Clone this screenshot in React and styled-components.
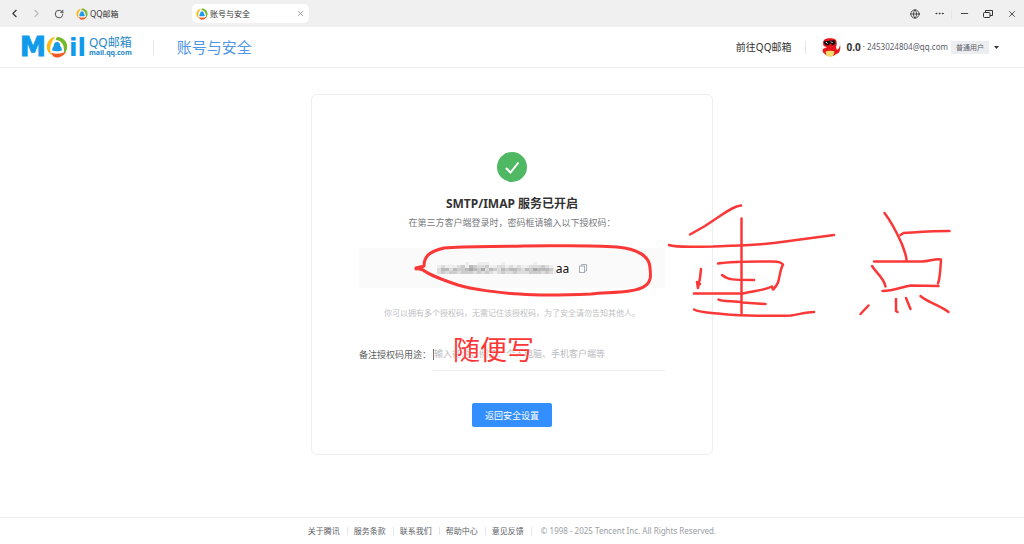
import React from 'react'
import styled, { createGlobalStyle } from 'styled-components'
import { ChevronLeft, ChevronRight, RotateCw, Globe, Ellipsis, Minus, X } from 'lucide-react'

const GlobalStyle = createGlobalStyle`
    * {
        box-sizing: border-box;
    }
    body {
        margin: 0;
        background: #fff;
        color: #333;
        font-family: "Noto Sans", "Noto Sans CJK SC", sans-serif;
        font-size: 8px;
    }
    button, input {
        font-family: inherit;
        border: none;
        padding: 0;
        background: none;
        color: inherit;
    }
    a {
        color: inherit;
        text-decoration: none;
    }
`

const Page = styled.div`
    min-height: 100vh;
    display: flex;
    flex-direction: column;
`

const TitleBar = styled.div`
    height: 27px;
    padding: 0 0 0 6px;
    display: flex;
    align-items: center;
    background: #f0f0f0;
`
const IconButton = styled.button`
    width: ${props => props.$width || 24}px;
    height: 20px;
    display: flex;
    align-items: center;
    justify-content: center;
    color: ${props => props.$color || '#333'};
`
const Nav = styled.div`
    display: flex;
    gap: 5px;
`
const Tab = styled.div`
    height: 19px;
    width: 117px;
    padding: 0 4px;
    display: flex;
    align-items: center;
    gap: 2px;
    border-radius: 5px;
    background: ${props => props.$active ? '#fff' : 'transparent'};
`
const TabLabel = styled.span`
    flex: 1;
    line-height: 16px;
`
const Tabs = styled.div`
    display: flex;
    gap: 3px;
    margin-left: 5px;
    flex: 1;
`
const WindowButtons = styled.div`
    display: flex;
    align-items: center;
`
const Divider = styled.span`
    width: 1px;
    height: ${props => props.$height || 10}px;
    background: #e3e5e8;
`

const Header = styled.header`
    height: 41px;
    padding: 0 25px 0 21px;
    display: flex;
    align-items: center;
    border-bottom: 1px solid #edeef0;
`
const Logo = styled.a`
    display: flex;
    align-items: center;
    margin-right: 21px;
`
const LogoText = styled.span`
    display: flex;
    flex-direction: column;
    margin-left: 3px;
    color: #1e88c9;
    font-size: 12px;
    line-height: 12px;
`
const LogoDomain = styled.span`
    font-size: 7px;
    line-height: 8px;
    font-weight: 700;
`
const PageTitle = styled.h1`
    flex: 1;
    margin: 0 0 0 23px;
    font-size: 15px;
    line-height: 20px;
    font-weight: 400;
    color: #4f97e6;
`
const MailLink = styled.a`
    margin-right: 14px;
    font-size: 10px;
    line-height: 16px;
`
const User = styled.button`
    display: flex;
    align-items: center;
    margin-left: 15px;
    font-size: 8px;
    line-height: 16px;
    color: #5c6068;
`
const UserName = styled.b`
    margin-left: 5px;
    font-size: 10px;
    color: #333;
`
const Dot = styled.span`
    margin: 0 2px;
`
const Badge = styled.span`
    margin: 0 5px 0 3px;
    padding: 0 5px;
    font-size: 7px;
    line-height: 13px;
    background: #eceef1;
`

const Main = styled.main`
    flex: 1;
    padding: 26px 16px;
`
const Card = styled.section`
    position: relative;
    max-width: 402px;
    margin: 0 auto;
    padding: 57px 47px 27px;
    display: flex;
    flex-direction: column;
    align-items: center;
    border: 1px solid #edeef0;
    border-radius: 6px;
`
const Title = styled.h2`
    margin: 12px 0 0;
    font-size: 12px;
    line-height: 20px;
    font-weight: 700;
`
const SubTitle = styled.p`
    margin: 0;
    font-size: 9px;
    line-height: 18px;
    color: #77797d;
`
const CodeBox = styled.div`
    width: 100%;
    height: 40px;
    margin-top: 16px;
    display: flex;
    align-items: center;
    justify-content: center;
    background: #fafafa;
    font-size: 12px;
    color: #111;
`
const CopyButton = styled.button`
    display: flex;
    margin-left: 10px;
    color: #a9afb8;
`
const Hint = styled.p`
    margin: 17px 0;
    line-height: 16px;
    color: #bfc1c4;
`
const Field = styled.div`
    width: 100%;
    display: flex;
    align-items: center;
    font-size: 9px;
    line-height: 16px;
`
const Label = styled.label`
    width: 74px;
    color: #5c5e61;
`
const InputLine = styled.div`
    flex: 1;
    height: 33px;
    display: flex;
    align-items: center;
    border-bottom: 1px solid #edeef0;
`
const Caret = styled.span`
    width: 1px;
    height: 11px;
    background: #777;
`
const Input = styled.input`
    flex: 1;
    min-width: 0;
    font-size: 9px;
    line-height: 16px;
    outline: none;

    &::placeholder {
        color: #b9bbbe;
        opacity: 1;
    }
`
const BackButton = styled.button`
    width: 80px;
    height: 24px;
    margin-top: 32px;
    border-radius: 2px;
    background: #338fff;
    color: #fff;
    font-size: 9px;
`
const Notes = styled.svg`
    position: absolute;
    top: 0;
    left: 0;
    overflow: visible;
    pointer-events: none;
`

const Footer = styled.footer`
    height: 27px;
    display: flex;
    align-items: center;
    justify-content: center;
    gap: 6px;
    border-top: 1px solid #edeef0;
    line-height: 16px;
    color: #5c6068;
`
const FooterLink = styled.a`
    padding-right: 1px;
`
const Copyright = styled.span`
    margin-left: 3px;
    color: #9a9ea4;
`

const footerLinks = ['关于腾讯', '服务条款', '联系我们', '帮助中心', '意见反馈']

// grey levels of the masked code, one row per line of blocks
const mosaic = [
    'fffffffeffeeefffefffffffefffff',
    'edeeedcebcddceeddededeedddcdef',
    'dbbdbccbabcadbcdbcbbcdbcabbbce',
    'dcdccdcccdcdcdedcddcdddcccdcde',
]

const Ring = ({ size }) => (
    <svg width={size} height={size} viewBox="0 0 22 22" aria-hidden="true">
        <path d="M9.500.8C4 1.500.8 6 .8 11c0 3 1.500 6 4.500 8C3.500 14 3.500 7 9.500.8z" fill="#fdb913" />
        <path d="M11 1c6 0 10.200 4.500 10.200 9.500 0 3-1 5-3.200 7.500C18.500 10 17 5 9.500 3.800z" fill="#76b82a" />
        <path d="M5 16.500c5 2 10 1.500 15-1-1.500 3.500-5 6-9 6-3 0-5-2-6-5z" fill="#f15a22" />
        <path d="M11 6c2 0 3.200 1.500 3.200 4 1.500 1.500 1.800 3 1.500 4.500-2 1-7.500 1-9.400 0-.3-1.500 0-3 1.500-4.500 0-2.500 1.200-4 3.200-4z" fill="#1a9be8" />
    </svg>
)

const Brand = () => (
    <svg width="65" height="34" viewBox="0 0 65 34" role="img" aria-label="Mail">
        <text x="-1" y="26" fill="#0f9bea" stroke="#0f9bea" fontSize="26" fontWeight="700" fontFamily="DejaVu Sans">M</text>
        <svg x="25" y="6" width="22" height="22">
            <Ring size={22} />
        </svg>
        <text x="48" y="26" fill="#0f9bea" fontSize="25" fontWeight="700" fontFamily="DejaVu Sans">il</text>
    </svg>
)

const Avatar = () => (
    <svg width="20" height="20" viewBox="0 0 20 20" aria-hidden="true">
        <circle cx="10" cy="10" r="9.5" fill="#fff" stroke="#eee" />
        <path d="M3 3C5 .5 13 .5 15 3c1 2 1 5 0 7l1 3c2-1 2.500-3 3-5 1 5-1 9-4 9-2 3-9 3-11 0-2-1-3-3-2-5 1-1 3-1 4-2-2 0-4-1-4-3z" fill="#e8161b" />
        <path d="M2 4.500l12-1.500.500 4-3 1.500-2.500-2.500-1 2.500-4-.5z" fill="#181012" />
        <path d="M5 5l1.500 1.500M10 4.500l1.500 1.500" stroke="#fff" />
        <path d="M4.500 14.500c3-1 6-1 9 0l-1 4c-2 1.500-5 1.500-7 0z" fill="#f5dc68" />
    </svg>
)

const App = () => {
    return (
        <>
            <GlobalStyle />
            <Page>
                <TitleBar>
                    <Nav>
                        <IconButton $width={17} aria-label="后退"><ChevronLeft size={13} strokeWidth={2} /></IconButton>
                        <IconButton $width={17} aria-label="前进" $color="#bbb"><ChevronRight size={13} strokeWidth={2} /></IconButton>
                        <IconButton $width={17} aria-label="刷新"><RotateCw size={10} strokeWidth={2} /></IconButton>
                    </Nav>
                    <Tabs>
                        <Tab>
                            <Ring size={12} />
                            <TabLabel>QQ邮箱</TabLabel>
                        </Tab>
                        <Tab $active>
                            <Ring size={12} />
                            <TabLabel>账号与安全</TabLabel>
                            <IconButton $width={10} aria-label="关闭标签" $color="#888"><X size={9} strokeWidth={2} /></IconButton>
                        </Tab>
                    </Tabs>
                    <WindowButtons>
                        <IconButton aria-label="语言"><Globe size={10} strokeWidth={2} /></IconButton>
                        <IconButton aria-label="更多"><Ellipsis size={11} strokeWidth={2} /></IconButton>
                        <Divider />
                        <IconButton aria-label="最小化"><Minus size={11} strokeWidth={2} /></IconButton>
                        <IconButton aria-label="还原">
                            <svg width="10" height="10" viewBox="0 0 10 10" fill="none" stroke="currentColor">
                                <rect x="0.5" y="3.5" width="6.5" height="5" rx="1" />
                                <path d="M2.5 3.5v-2h7v5H7" />
                            </svg>
                        </IconButton>
                        <IconButton aria-label="关闭"><X size={10} strokeWidth={2} /></IconButton>
                    </WindowButtons>
                </TitleBar>

                <Header>
                    <Logo href="#">
                        <Brand />
                        <LogoText>
                            QQ邮箱
                            <LogoDomain>mail.qq.com</LogoDomain>
                        </LogoText>
                    </Logo>
                    <Divider $height={15} />
                    <PageTitle>账号与安全</PageTitle>
                    <MailLink href="#">前往QQ邮箱</MailLink>
                    <Divider $height={13} />
                    <User>
                        <Avatar />
                        <UserName>0.0</UserName>
                        <Dot>·</Dot>
                        2453024804@qq.com
                        <Badge>普通用户</Badge>
                        <svg width="5" height="3" viewBox="0 0 5 3" aria-hidden="true">
                            <path d="M0 0h5L2.5 3z" fill="#333" />
                        </svg>
                    </User>
                </Header>

                <Main>
                    <Card>
                        <svg width="30" height="30" viewBox="0 0 30 30" aria-hidden="true">
                            <circle cx="15" cy="15" r="15" fill="#4fb863" />
                            <path d="M9 16l4.500 4.500L21.500 10.500" fill="none" stroke="#fff" strokeWidth="2" />
                        </svg>
                        <Title>SMTP/IMAP 服务已开启</Title>
                        <SubTitle>在第三方客户端登录时，密码框请输入以下授权码：</SubTitle>
                        <CodeBox>
                            <svg width="119" height="14" viewBox="0 0 119 14" shapeRendering="crispEdges" aria-hidden="true">
                                {mosaic.map((line, y) => line.split('').map((c, x) => (
                                    <rect key={`${x}-${y}`} x={x * 4} y={1 + y * 3} width="4" height="3" fill={c === 'f' ? '#fafafa' : `#${c}${c}${c}`} />
                                )))}
                            </svg>
                            aa
                            <CopyButton aria-label="复制">
                                <svg width="8" height="9" viewBox="0 0 8 9" fill="none" stroke="currentColor">
                                    <path d="M2.500 2V.5h5v6.500H6" />
                                    <rect x="0.5" y="2" width="5" height="6.500" />
                                </svg>
                            </CopyButton>
                        </CodeBox>
                        <Hint>你可以拥有多个授权码，无需记住该授权码，为了安全请勿告知其他人。</Hint>
                        <Field>
                            <Label htmlFor="remark">备注授权码用途：</Label>
                            <InputLine>
                                <Caret />
                                <Input id="remark" placeholder="输入备注，例如：个人电脑、手机客户端等" />
                            </InputLine>
                        </Field>
                        <BackButton>返回安全设置</BackButton>

                        {/* hand-written marks over the card */}
                        <Notes width="400" height="359" viewBox="312 95 400 359">
                            <g fill="none" stroke="#fb3838" strokeWidth="2.500" strokeLinecap="round" strokeLinejoin="round">
                                <path d="M416 269l8-3c0-9 4-14 20-18 24-2 52-1 80-2 35 0 64-1 93 1 22 2 33 10 33 21 1 8 1 14-5 18-10 7-34 6-54 8-22 1-50 2-71 0-22-1-49-5-62-9-15-5-27-9-35-15l-7-2 8-2" strokeWidth="3" />
                                <path d="M690 234.500l15-8.500 15-10c9-6 15-10 21-10.500" />
                                <path d="M669 245c8 3 29 1.500 44 1.500 20-1 41-1 61-3.500l60-8" />
                                <path d="M741.500 218.500V313" />
                                <path d="M718 263.500c14-2 30-2 44-2 11 0 18-1 21 3-3 5-3 12-5 18-1 3-3 5-5 7l-1-3c-8 4-18 4-29 7" />
                                <path d="M722 275c6 5 11 5 32 5" />
                                <path d="M701 269l-1 9-2 10-1-6 3 2" />
                                <path d="M694 293.500h48" />
                                <path d="M718.500 299.500c3 2 16 1.500 24 3l23 1.500" />
                                <path d="M694 309.500c7 4 21 3 34 5 22 1 42 2 63 1 8-1 15-3.500 23-3.500" />
                                <path d="M884.500 213c7 9 12 19 17 30 3 8 5 13 5 17" />
                                <path d="M900.500 235l3-2c17-1 30-2 46-2" />
                                <path d="M874 261.500h48c7 0 13-3 19-2-.5 8-1 20-3 24" />
                                <path d="M872 266c5 8 12 12 13.500 20.500" />
                                <path d="M882.500 291c12 0 18-4 28-5.500l28 .5" />
                                <path d="M868.500 305.500l-8 8.500M896 299v12l1.500 1M906 298l4.500 11M920.500 296c7 6 18 9 28 16" />
                            </g>
                            <text x="453" y="360" fontSize="27" fill="#fb3838" stroke="#fff" strokeWidth="1" paintOrder="stroke">随便写</text>
                        </Notes>
                    </Card>
                </Main>

                <Footer>
                    {footerLinks.map(text => (
                        <React.Fragment key={text}>
                            <FooterLink href="#">{text}</FooterLink>
                            <Divider $height={8} />
                        </React.Fragment>
                    ))}
                    <Copyright>© 1998 - 2025 Tencent Inc. All Rights Reserved.</Copyright>
                </Footer>
            </Page>
        </>
    )
}

export default App
